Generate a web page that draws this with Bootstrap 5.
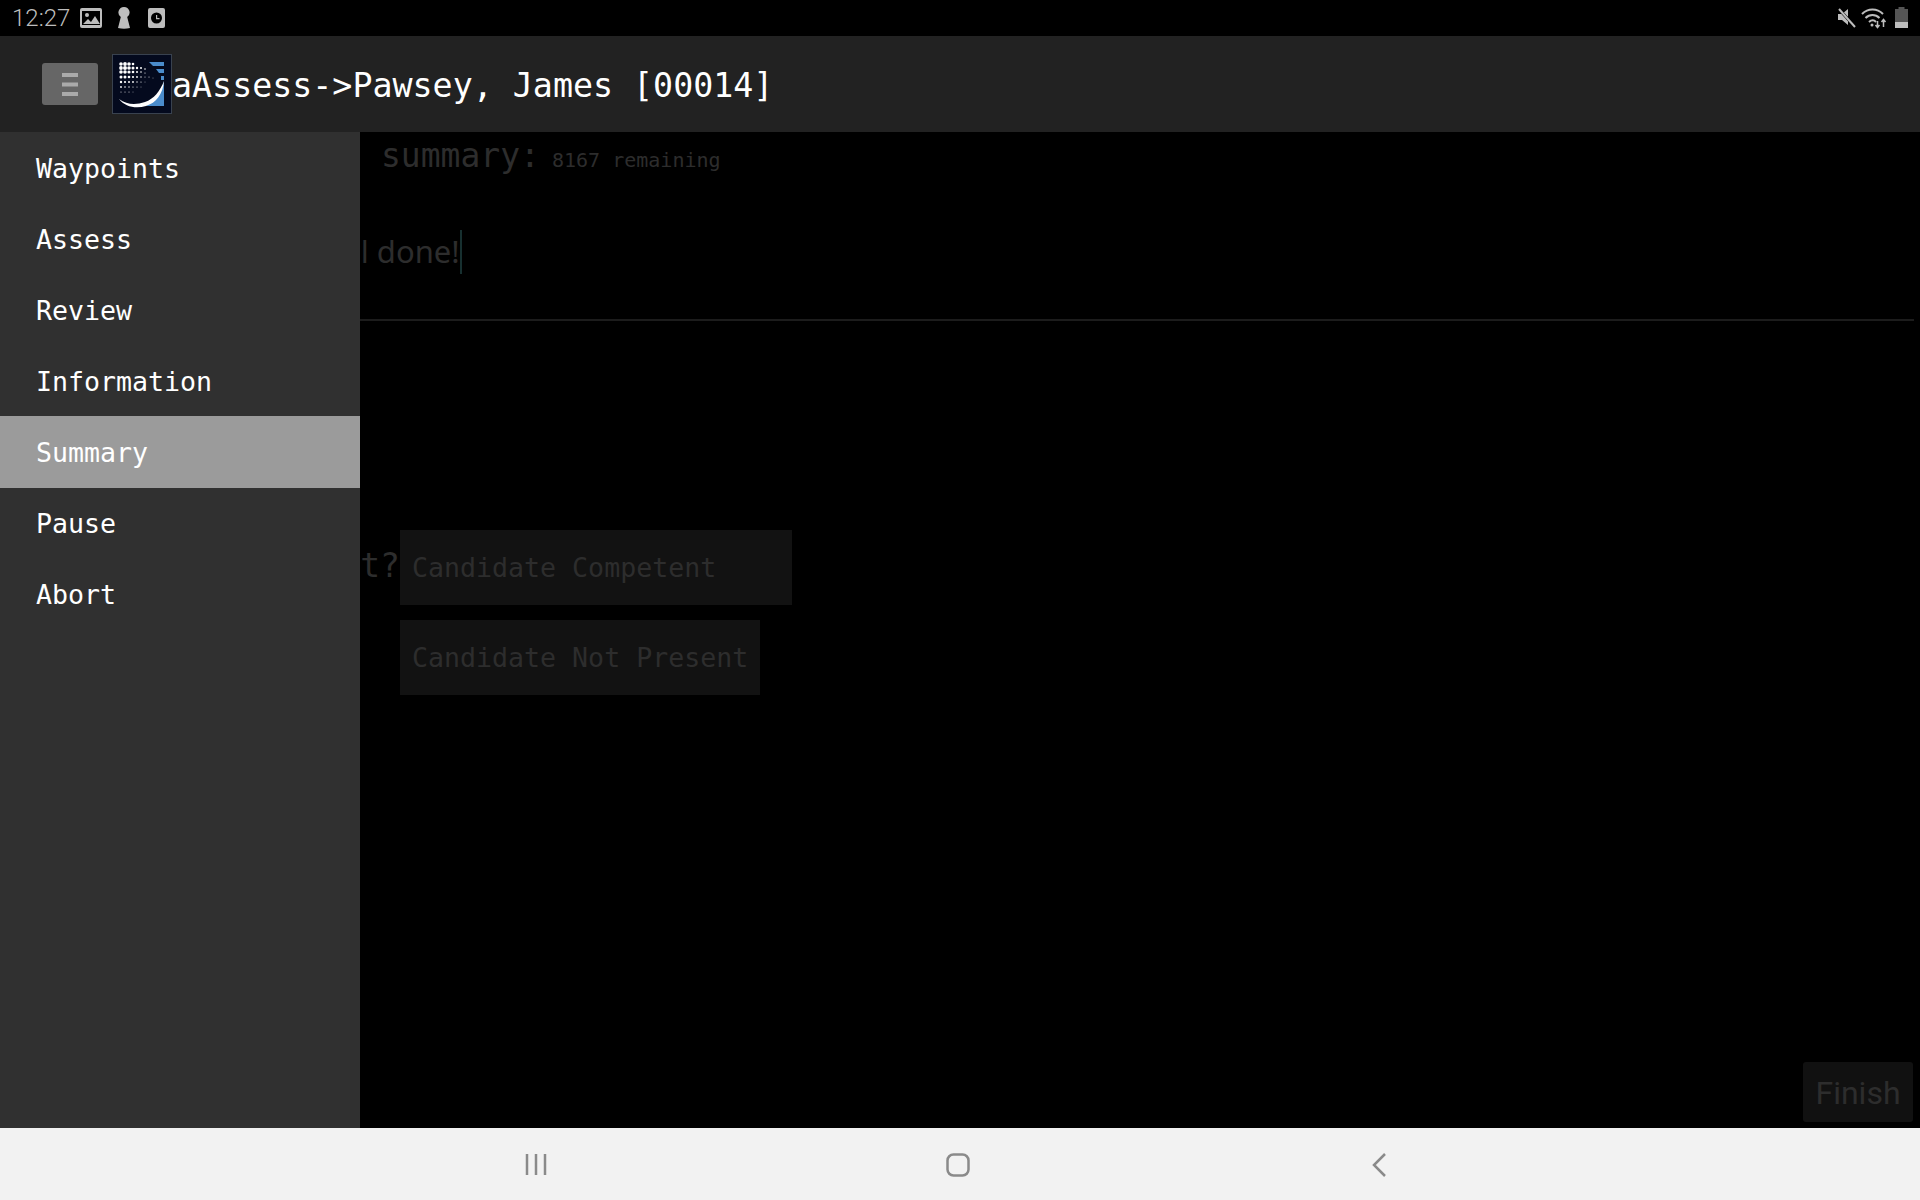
<!DOCTYPE html>
<html lang="en">
<head>
<meta charset="utf-8">
<title>aAssess</title>
<link href="https://cdn.jsdelivr.net/npm/bootstrap@5.3.0/dist/css/bootstrap.min.css" rel="stylesheet">
<style>
html,body{height:100%;background:#000;overflow:hidden}
body{font-family:"DejaVu Sans Mono",monospace}
.shell{height:1200px}
.statusbar{height:36px;background:#000;padding:0 10px 0 12px;color:#bdbdbd}
.clock{font:300 24px/36px Roboto,sans-serif;margin-right:10px;width:58px}
.sticon{display:block;fill:#bdbdbd}
.appbar{height:96px;background:#222;padding-left:42px}
.menubtn{width:56px;height:42px;background:#666;border:0;border-radius:3px;padding:0}
.logo{display:block;width:60px;height:60px;margin-left:14px;flex:none}
.apptitle{font-size:33.3px;line-height:42px;color:#fff;white-space:nowrap;padding-top:4px}
.stage{position:relative;height:996px;overflow:hidden;background:#000}
.drawer{position:absolute;left:0;top:0;bottom:0;width:360px;background:#303030;z-index:2}
.drawer a{display:block;height:71px;line-height:74px;padding-left:36px;font-size:26.6px;color:#fff;text-decoration:none}
.drawer a.current{background:#9b9b9b;height:72px;margin-bottom:-1px}
.pagebody{height:100%;position:relative;color:#2d2d2d}
.fieldhead{padding:4px 0 0 381px;font-size:33px;line-height:40px;white-space:nowrap}
.fieldhead small{font-size:20px}
.fieldtext{margin:46px 6px 0 0;height:95px;padding-left:333px;border-bottom:2px solid #1c1c1c;font:31px/50px "Noto Sans",sans-serif}
.caret-bar{display:inline-block;width:2px;height:44px;background:#173030;vertical-align:-11px;margin-left:0}
.question{margin-top:209px;padding-left:200px}
.qlabel{width:200px;text-align:right;font-size:33px;line-height:72px;white-space:nowrap}
.answers{gap:15px;align-items:flex-start}
.ansbtn{height:75px;background:#121212;border:0;border-radius:0;padding:0 12px;color:#2d2d2d;font:26.6px "DejaVu Sans Mono",monospace;text-align:left}
.ans-wide{width:392px}
.finishbtn{position:absolute;right:7px;bottom:6px;width:110px;height:60px;background:#111;border:0;border-radius:3px;color:#2d2d2d;padding:2px 0 0;font:400 32px Roboto,sans-serif}
.softkeys{height:72px;background:#f2f2f2}
.softkeys svg{position:absolute;top:25px}
</style>
</head>
<body>
<div class="shell d-flex flex-column">
  <div class="statusbar d-flex align-items-center">
    <span class="clock">12:27</span>
    <svg class="sticon" width="22" height="20" viewBox="0 0 22 20"><path fill-rule="evenodd" d="M2 0h18a2 2 0 0 1 2 2v16a2 2 0 0 1-2 2H2a2 2 0 0 1-2-2V2a2 2 0 0 1 2-2zm0 3v14h18V3z"/><circle cx="7" cy="7" r="2"/><path d="M3 16l5-5 3 3 4-6 5 8z"/></svg>
    <svg class="sticon" style="margin-left:15px" width="14" height="22" viewBox="0 0 14 22"><path d="M7 0a5.500 5.500 0 0 1 3.200 10L13 21q-6 1.500-12 0l2.800-11A5.500 5.500 0 0 1 7 0z"/></svg>
    <svg class="sticon" style="margin-left:17px" width="17" height="20" viewBox="0 0 17 20"><path fill-rule="evenodd" d="M2 0h13a2 2 0 0 1 2 2v16a2 2 0 0 1-2 2H2a2 2 0 0 1-2-2V2a2 2 0 0 1 2-2zm6.500 4.500a5.500 5.500 0 1 0 0 11 5.500 5.500 0 0 0 0-11z"/><path d="M8 7h1.200v3h2.300v1.200H8z"/></svg>
    <div class="ms-auto d-flex align-items-center">
      <svg width="18" height="20" viewBox="0 0 18 20"><path fill="#bdbdbd" d="M0 6h4l6-5v16l-6-5H0z"/><path stroke="#000" stroke-width="3" d="M0 0l18 20"/><path stroke="#bdbdbd" stroke-width="2" d="M1 1l16 18"/></svg>
      <svg style="margin-left:5px" width="26" height="22" viewBox="0 0 26 22" fill="none" stroke="#bdbdbd" stroke-width="2"><path d="M1 7c6-6 15-6 21 0"/><path d="M4.500 11c4-4 10-4 14 0"/><path d="M8 15c2.500-2.300 5-2.300 7 0"/><circle cx="11" cy="18" r="1.500" fill="#bdbdbd" stroke="none"/><path stroke-width="1.500" d="M16.500 14v6M14.500 18l2 2.500 2-2.500M22.500 20v-7M20.500 15l2-2.500 2 2.500"/></svg>
      <svg class="ms-2" width="13" height="22" viewBox="0 0 13 22" style="margin-right:2px"><rect x="3.500" y="0" width="6" height="3" fill="#555"/><rect y="2" width="13" height="19" fill="#555"/><rect y="15" width="13" height="6" fill="#bdbdbd"/></svg>
    </div>
  </div>
  <nav class="appbar d-flex align-items-center">
    <button class="menubtn d-flex flex-column align-items-center justify-content-center" type="button" aria-label="Menu">
      <svg width="16" height="23" viewBox="0 0 16 23" fill="#aaa"><rect width="16" height="4"/><rect y="9.500" width="16" height="4"/><rect y="19" width="16" height="4"/></svg>
    </button>
    <svg class="logo" viewBox="0 0 60 60">
      <rect width="60" height="60" fill="#040a1e"/><rect x=".5" y=".5" width="59" height="59" fill="none" stroke="#39424f"/>
      <path fill="#4a8ccc" d="M37 8h15v4H41zM44 15h8v4h-5zM49 22h3v4h-3zM52 27v25H34c9-4 16-13 18-25z"/>
      <path fill="#fff" d="M7 45c8 6 17 6 26 3 9-3 15-11 19-21-1 13-8 22-18 25-10 3-21 1-27-7z"/>
      <g fill="#fff">
        <circle cx="9" cy="10" r="1.800"/><circle cx="13" cy="10" r="1.900"/><circle cx="17" cy="10" r="1.800"/><circle cx="21" cy="10" r="1.300"/>
        <circle cx="9" cy="14" r="1.900"/><circle cx="13" cy="14" r="2"/><circle cx="17" cy="14" r="1.800"/><circle cx="21" cy="14" r="1.500"/><circle cx="25" cy="14" r="1.200"/><circle cx="29" cy="14" r="1"/><circle cx="33" cy="15" r=".8"/>
        <circle cx="9" cy="18" r="1.800"/><circle cx="13" cy="18" r="1.800"/><circle cx="17" cy="18" r="1.600"/><circle cx="21" cy="18" r="1.300"/><circle cx="25" cy="18" r="1"/><circle cx="29" cy="18" r=".8"/><circle cx="33" cy="19" r=".6"/>
        <circle cx="9" cy="23" r="1.500"/><circle cx="13" cy="23" r="1.500"/><circle cx="17" cy="23" r="1.300"/><circle cx="21" cy="23" r="1.100"/><circle cx="25" cy="23" r=".9"/><circle cx="29" cy="23" r=".7"/><circle cx="33" cy="23" r=".5"/><circle cx="37" cy="23" r=".5"/><circle cx="41" cy="24" r=".4"/>
        <circle cx="9" cy="28" r="1.200"/><circle cx="13" cy="28" r="1.100"/><circle cx="17" cy="28" r="1"/><circle cx="21" cy="28" r=".9"/><circle cx="25" cy="28" r=".7"/><circle cx="29" cy="28" r=".6"/><circle cx="33" cy="28" r=".4"/>
        <circle cx="9" cy="33" r=".9"/><circle cx="13" cy="33" r=".8"/><circle cx="17" cy="33" r=".7"/><circle cx="21" cy="33" r=".6"/><circle cx="25" cy="33" r=".5"/><circle cx="29" cy="33" r=".4"/>
        <circle cx="9" cy="38" r=".5"/><circle cx="13" cy="38" r=".5"/><circle cx="17" cy="38" r=".5"/><circle cx="21" cy="38" r=".4"/>
      </g>
    </svg>
    <span class="apptitle">aAssess-&gt;Pawsey, James [00014]</span>
  </nav>
  <main class="stage">
    <div class="drawer">
      <a href="#">Waypoints</a>
      <a href="#">Assess</a>
      <a href="#">Review</a>
      <a href="#">Information</a>
      <a href="#" class="current">Summary</a>
      <a href="#">Pause</a>
      <a href="#">Abort</a>
    </div>
    <div class="pagebody">
      <div class="fieldhead">summary:<small> 8167 remaining</small></div>
      <div class="fieldtext">All done!<span class="caret-bar"></span></div>
      <div class="question d-flex">
        <div class="qlabel">Competent?</div>
        <div class="answers d-flex flex-column">
          <button class="ansbtn ans-wide" type="button">Candidate Competent</button>
          <button class="ansbtn" type="button">Candidate Not Present</button>
        </div>
      </div>
      <button class="finishbtn" type="button">Finish</button>
    </div>
  </main>
  <div class="softkeys position-relative">
    <svg style="left:525px" width="22" height="23" viewBox="0 0 22 23" stroke="#8a8a8a" stroke-width="2.500"><path d="M2 1v21M11 1v21M20 1v21"/></svg>
    <svg style="left:946px" width="24" height="24" viewBox="0 0 24 24" fill="none" stroke="#8a8a8a" stroke-width="2.500"><rect x="1.500" y="1.500" width="21" height="21" rx="6"/></svg>
    <svg style="left:1372px" width="14" height="24" viewBox="0 0 14 24" fill="none" stroke="#8a8a8a" stroke-width="2.500"><path d="M13 1L2 12l11 11"/></svg>
  </div>
</div>
<script src="https://cdn.jsdelivr.net/npm/bootstrap@5.3.0/dist/js/bootstrap.bundle.min.js"></script>
</body>
</html>
